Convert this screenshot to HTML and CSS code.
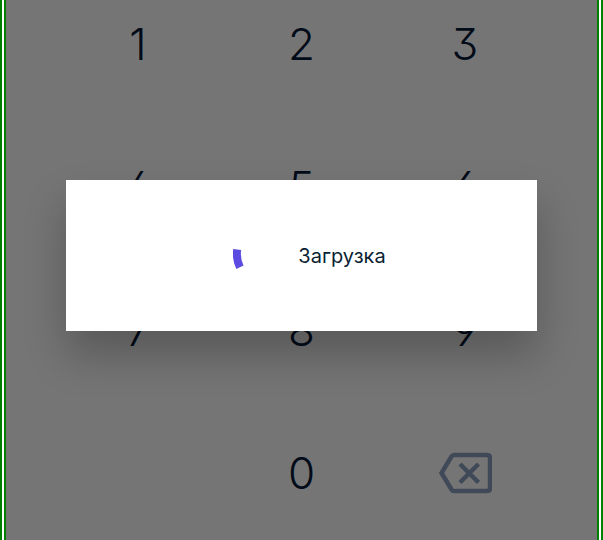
FILE: index.html
```html
<!DOCTYPE html>
<html lang="ru">
<head>
<meta charset="utf-8">
<meta name="viewport" content="width=device-width, initial-scale=1">
<title>Загрузка</title>
<link rel="stylesheet" href="styles.css">
</head>
<body>
<div class="screen">
  <main class="keypad">
    <button class="key" type="button">1</button>
    <button class="key" type="button">2</button>
    <button class="key" type="button">3</button>
    <button class="key" type="button">4</button>
    <button class="key" type="button">5</button>
    <button class="key" type="button">6</button>
    <button class="key" type="button">7</button>
    <button class="key" type="button">8</button>
    <button class="key" type="button">9</button>
    <button class="key key-zero" type="button">0</button>
    <button class="key key-erase" type="button" aria-label="Стереть">
      <svg class="erase-icon" viewBox="0 0 54 42" aria-hidden="true">
        <path d="M16 3H49Q52 3 52 6V36Q52 39 49 39H16Q14.500 39 13.500 37.500L3.500 21L13.500 4.500Q14.500 3 16 3Z"/>
        <path d="M22 12L40.500 30.500M40.500 12L22 30.500"/>
      </svg>
    </button>
  </main>
  <div class="overlay">
    <div class="dialog" role="dialog" aria-modal="true" aria-labelledby="status">
      <svg class="spinner" viewBox="0 0 44 44" aria-hidden="true">
        <path d="M4.200 15.500A31 31 0 0 0 6.900 33.300"/>
      </svg>
      <p class="status" id="status">Загрузка</p>
    </div>
  </div>
</div>
</body>
</html>
```
FILE: styles.css
```css
* {
  box-sizing: border-box;
}

body {
  margin: 0;
  font-family: Inter, "Noto Sans", sans-serif;
  background: #fff;
}

.screen {
  position: relative;
  min-height: 100vh;
  border: 6px double #008000;
  border-width: 0 6px;
  overflow: hidden;
}

.keypad {
  display: grid;
  grid-template-columns: repeat(3, 1fr);
  grid-auto-rows: 88px;
  row-gap: 55px;
  width: 83%;
  margin: 0 auto;
}

.key {
  display: flex;
  align-items: center;
  justify-content: center;
  padding: 0;
  border: 0;
  background: none;
  color: #041838;
  font: inherit;
  font-size: 44px;
  font-weight: 350;
  font-feature-settings: "cv02", "cv03", "cv04", "cv09";
}

.key-zero {
  grid-column: 2;
}

.key-erase {
  color: #8ba0bf;
}

.erase-icon {
  width: 54px;
  height: 42px;
  fill: none;
  stroke: currentColor;
  stroke-width: 4.5;
}

.overlay {
  position: absolute;
  inset: 0;
  display: flex;
  align-items: center;
  justify-content: center;
  padding: 0 60px 29px;
  background: rgba(0, 0, 0, 0.54);
}

.dialog {
  display: flex;
  flex: 1;
  align-items: center;
  justify-content: center;
  gap: 21px;
  min-height: 151px;
  padding-left: 16px;
  background: #fff;
  box-shadow: 0 24px 40px 0 rgba(0, 0, 0, 0.24);
}

.spinner {
  width: 44px;
  height: 44px;
  fill: none;
  stroke: #5b4be0;
  stroke-width: 8;
}

.status {
  margin: 0;
  color: #0b1f33;
  font-size: 20px;
  line-height: 24px;
}
```
